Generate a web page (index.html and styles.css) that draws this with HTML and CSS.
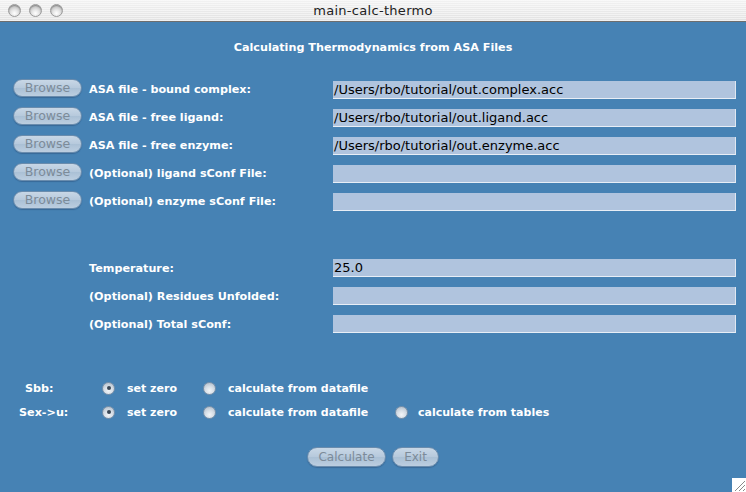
FILE: index.html
```html
<!DOCTYPE html>
<html>
<head>
<meta charset="utf-8">
<link rel="stylesheet" href="styles.css">
</head>
<body>
<div class="window">
  <div class="titlebar">
    <div class="lights">
      <span class="light"></span><span class="light"></span><span class="light"></span>
    </div>
    <div class="wintitle">main-calc-thermo</div>
  </div>
  <div class="content">
    <h1 class="heading">Calculating Thermodynamics from ASA Files</h1>

    <div class="files">
      <button class="btn browse">Browse</button>
      <div class="label">ASA file - bound complex:</div>
      <div class="field">/Users/rbo/tutorial/out.complex.acc</div>

      <button class="btn browse">Browse</button>
      <div class="label">ASA file - free ligand:</div>
      <div class="field">/Users/rbo/tutorial/out.ligand.acc</div>

      <button class="btn browse">Browse</button>
      <div class="label">ASA file - free enzyme:</div>
      <div class="field">/Users/rbo/tutorial/out.enzyme.acc</div>

      <button class="btn browse">Browse</button>
      <div class="label">(Optional) ligand sConf File:</div>
      <div class="field"></div>

      <button class="btn browse">Browse</button>
      <div class="label">(Optional) enzyme sConf File:</div>
      <div class="field"></div>
    </div>

    <div class="params">
      <div class="label">Temperature:</div>
      <div class="field">25.0</div>
      <div class="label">(Optional) Residues Unfolded:</div>
      <div class="field"></div>
      <div class="label">(Optional) Total sConf:</div>
      <div class="field"></div>
    </div>

    <div class="radios">
      <div class="rlabel sbb">Sbb:</div>
      <div class="opt"><span class="radio on"></span>set zero</div>
      <div class="opt"><span class="radio"></span>calculate from datafile</div>
      <div></div>

      <div class="rlabel">Sex-&gt;u:</div>
      <div class="opt"><span class="radio on"></span>set zero</div>
      <div class="opt"><span class="radio"></span>calculate from datafile</div>
      <div class="opt tight"><span class="radio"></span>calculate from tables</div>
    </div>

    <div class="actions">
      <button class="btn calc">Calculate</button>
      <button class="btn exit">Exit</button>
    </div>
  </div>
  <div class="grip">
    <svg width="14" height="14" viewBox="0 0 14 14">
      <line x1="3" y1="13" x2="13" y2="3" stroke="#8a8a8a" stroke-width="1"/>
      <line x1="7" y1="13" x2="13" y2="7" stroke="#8a8a8a" stroke-width="1"/>
      <line x1="11" y1="13" x2="13" y2="11" stroke="#8a8a8a" stroke-width="1"/>
    </svg>
  </div>
</div>
</body>
</html>
```

FILE: styles.css
```css
* { box-sizing: border-box; }
html, body { margin: 0; padding: 0; }
body {
  width: 746px;
  height: 492px;
  overflow: hidden;
  font-family: "DejaVu Sans", "Liberation Sans", sans-serif;
}
.window {
  position: relative;
  width: 746px;
  height: 492px;
  background: #4682b4;
  display: flex;
  flex-direction: column;
}
.titlebar {
  height: 22px;
  flex: none;
  position: relative;
  background:
    repeating-linear-gradient(to bottom, rgba(255,255,255,0.5) 0 1px, rgba(0,0,0,0) 1px 2px),
    linear-gradient(to bottom, #f2f2f2, #e2e2e2);
  border-bottom: 1px solid #6e6e6e;
  display: flex;
  align-items: center;
  justify-content: center;
}
.lights {
  position: absolute;
  left: 8px;
  top: 4px;
  display: flex;
  gap: 8px;
}
.light {
  width: 13px;
  height: 13px;
  border-radius: 50%;
  border: 1px solid #9a9a9a;
  background: radial-gradient(circle at 50% 75%, #ffffff 0, #e6e6e6 35%, #b9b9b9 80%, #a8a8a8 100%);
  box-shadow: inset 0 1px 1px rgba(0,0,0,0.25);
}
.wintitle {
  font-size: 13px;
  color: #222;
  letter-spacing: 0.3px;
}
.content {
  flex: 1;
  padding-top: 18px;
  color: #fff;
}
.heading {
  margin: 0;
  font-size: 11.2px;
  line-height: 16px;
  font-weight: bold;
  text-align: center;
}
.files {
  margin-top: 23px;
  padding-left: 13px;
  display: grid;
  grid-template-columns: 69px 237px 403px;
  column-gap: 7px;
  row-gap: 8px;
  grid-auto-rows: 20px;
}
.files .field { align-self: end; }
.files .browse { align-self: start; }
.label {
  font-size: 11.2px;
  font-weight: bold;
  color: #fff;
  align-self: center;
  white-space: nowrap;
}
.field {
  height: 18px;
  background: #b0c4de;
  border-bottom: 1px solid #e8eef6;
  border-right: 1px solid #dfe7f1;
  font-size: 13px;
  line-height: 18px;
  color: #000;
  padding-left: 1px;
  white-space: nowrap;
}
.btn {
  height: 18px;
  border-radius: 9px;
  border: 1px solid #6a8cad;
  background: linear-gradient(to bottom, #c8d7e6 0%, #b6c9dc 50%, #aac0d5 51%, #bccee0 100%);
  color: #7c8b99;
  font-family: "DejaVu Sans", sans-serif;
  font-size: 12.5px;
  padding: 0;
  line-height: 16px;
  box-shadow: 0 1px 1px rgba(30,60,100,0.35);
}
.browse { width: 69px; }
.params {
  margin-top: 48px;
  padding-left: 89px;
  display: grid;
  grid-template-columns: 244px 403px;
  row-gap: 10px;
  grid-auto-rows: 18px;
}
.radios {
  margin-top: 46px;
  display: grid;
  grid-template-columns: 19px 83px 101px 192px 1fr;
  grid-auto-rows: 18px;
  row-gap: 6px;
}
.radios > :nth-child(4n+1) { grid-column: 2; }
.rlabel {
  font-size: 11.2px;
  font-weight: bold;
  align-self: center;
  justify-self: start;
}
.rlabel.sbb { padding-left: 6px; }
.opt {
  display: flex;
  align-items: center;
  gap: 12px;
  font-size: 11px;
  font-weight: bold;
  white-space: nowrap;
}
.opt.tight { gap: 10px; }
.radio {
  width: 13px;
  height: 13px;
  border-radius: 50%;
  flex: none;
  border: 1px solid #7d93aa;
  background: radial-gradient(circle at 50% 70%, #f2f5f8 0, #d6dee6 45%, #a9b6c4 100%);
  position: relative;
}
.radio.on::after {
  content: "";
  position: absolute;
  left: 3.5px;
  top: 3.5px;
  width: 4px;
  height: 4px;
  border-radius: 50%;
  background: #3a4755;
}
.actions {
  margin-top: 26px;
  display: flex;
  justify-content: center;
  gap: 6px;
}
.actions .btn { height: 20px; border-radius: 10px; line-height: 18px; font-size: 12px; }
.calc { width: 79px; }
.exit { width: 47px; }
.grip {
  position: absolute;
  right: 0;
  bottom: 0;
  width: 14px;
  height: 14px;
  background: #fff;
}
.grip svg { display: block; }
```
